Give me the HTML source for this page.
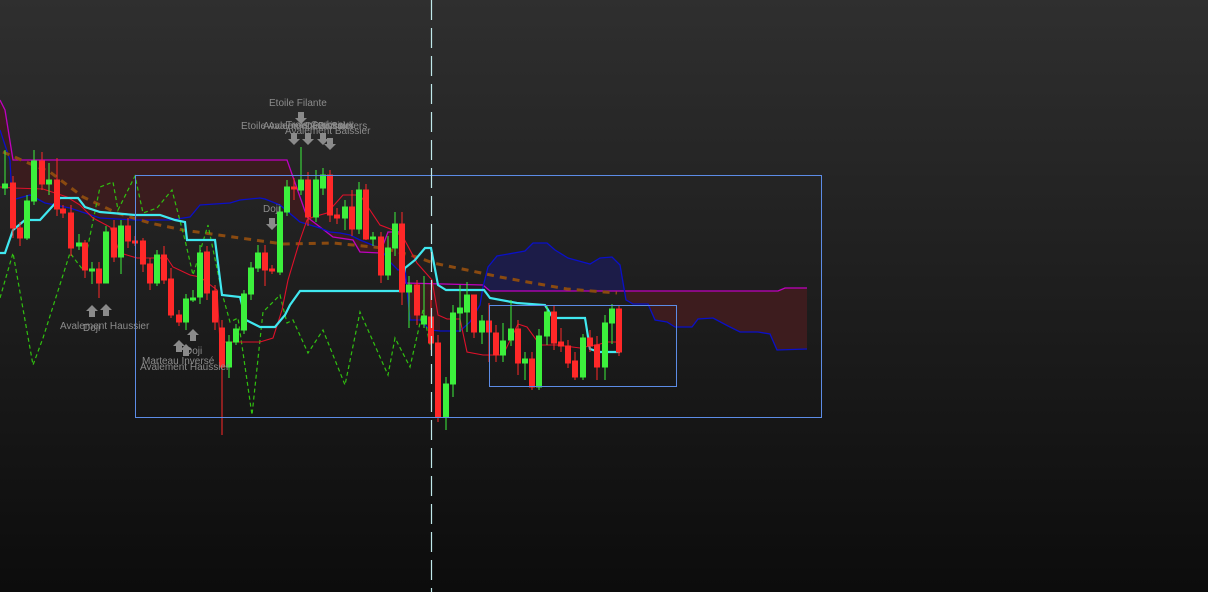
<!DOCTYPE html>
<html><head><meta charset="utf-8"><style>
html,body{margin:0;padding:0;width:1208px;height:592px;overflow:hidden;background:#1e1e1e}
svg{display:block}
text{font-family:"Liberation Sans",sans-serif;font-size:10px;fill:#8c8c8c}
</style></head><body>
<svg width="1208" height="592" viewBox="0 0 1208 592">
<defs><linearGradient id="bg" x1="0" y1="0" x2="0" y2="1"><stop offset="0" stop-color="#2f2f2f"/><stop offset="1" stop-color="#0c0c0c"/></linearGradient></defs>
<rect width="1208" height="592" fill="url(#bg)"/>
<polygon fill="#3d1c1e" opacity="0.9" points="0,100 5,110 13,160 287,160 293,177 307,217 333,237 353,240 360,252 380,253 388,232 402,232 405,283 440,283 440,331 430,330 420,320 410,320 405,268 398,270 390,262 380,248 360,240 350,235 340,233 330,232 320,228 300,222 280,205 265,199 260,198 240,200 230,203 200,205 190,217 170,220 135,220 100,218 70,208 45,203 30,195 12,200 10,160 0,130"/>
<polygon fill="#1c1c48" points="483,287 488,267 497,256 525,251 533,243 547,243 555,250 568,258 590,264 600,258 612,257 620,265 626,300 626,291 490,291"/>
<polygon fill="#3d1c1e" points="626,291 778,291 785,288 807,288 807,349 777,350 770,334 758,332 740,332 728,326 713,318 698,319 692,327 675,327 667,322 655,320 648,304 633,304 626,300"/>
<polyline fill="none" stroke="#c000c0" stroke-width="1.3" points="0,100 5,110 13,160 287,160 293,177 307,217 333,237 353,240 360,252 380,253 388,232 402,232 405,283 483,285 490,291 778,291 785,288 807,288"/>
<polyline fill="none" stroke="#0a10c8" stroke-width="1.3" points="0,130 10,160 12,200 30,195 45,203 70,208 100,218 135,220 170,220 190,217 200,205 230,203 240,200 260,198 265,199 280,205 300,222 320,228 330,232 340,233 350,235 360,240 380,248 390,262 398,270 405,268 410,320 420,320 430,330 440,331 460,331 470,322 480,305 483,287 488,267 497,256 525,251 533,243 547,243 555,250 568,258 590,264 600,258 612,257 620,265 626,300 633,304 648,304 655,320 667,322 675,327 692,327 698,319 713,318 728,326 740,332 758,332 770,334 777,350 807,349"/>
<polyline fill="none" stroke="#8a4a10" stroke-width="3" stroke-dasharray="7,6" points="3,152 33,165 50,172 83,197 117,213 150,223 183,230 233,237 283,244 333,243 383,248 417,257 433,263 467,270 500,277 533,283 567,289 617,293"/>
<polyline fill="none" stroke="#30c010" stroke-width="1.2" stroke-dasharray="4,3" points="0,298 13,253 33,365 43,338 70,253 83,270 100,187 113,182 118,210 135,176 143,213 157,208 172,190 185,240 193,275 208,225 222,293 230,322 238,318 252,415 263,312 280,295 287,323 293,320 308,353 323,330 345,385 360,312 388,375 395,338 410,367 423,310 430,345"/>
<polyline fill="none" stroke="#e0102a" stroke-width="1.1" points="0,187 13,188 43,189 67,197 80,205 93,218 110,227 120,253 137,258 167,258 173,267 190,275 200,277 217,290 220,342 260,342 273,338 282,310 288,280 300,240 307,220 313,217 327,213 343,195 360,195 380,225 393,230 403,237 417,263 432,280 438,315 447,319 460,319 467,352 483,355 503,355 518,324 527,327 540,345 557,345 580,348 600,344 607,342 620,342"/>
<polyline fill="none" stroke="#40e8f0" stroke-width="2.2" points="0,253 5,253 13,230 25,220 40,220 60,198 78,198 85,207 100,212 135,215 160,215 175,220 185,222 187,240 215,240 222,295 240,297 246,320 260,327 275,327 285,315 290,305 300,291 400,291 405,268 415,260 425,248 431,248 438,285 446,290 484,290 490,298 517,303 545,305 553,318 585,318 590,349 600,352 620,352"/>
<g stroke-width="1">
<g stroke="#ff2828" fill="#ff2828">
<line x1="13" y1="176" x2="13" y2="238"/><rect x="10.5" y="183" width="5" height="45"/>
<line x1="20" y1="222" x2="20" y2="246"/><rect x="17.5" y="228" width="5" height="10"/>
<line x1="42" y1="152" x2="42" y2="190"/><rect x="39.5" y="161" width="5" height="23"/>
<line x1="57" y1="158" x2="57" y2="216"/><rect x="54.5" y="180" width="5" height="29"/>
<line x1="63" y1="205" x2="63" y2="218"/><rect x="60.5" y="209" width="5" height="4"/>
<line x1="71" y1="205" x2="71" y2="256"/><rect x="68.5" y="213" width="5" height="35"/>
<line x1="85" y1="240" x2="85" y2="278"/><rect x="82.5" y="243" width="5" height="27"/>
<line x1="99" y1="262" x2="99" y2="298"/><rect x="96.5" y="269" width="5" height="14"/>
<line x1="114" y1="220" x2="114" y2="262"/><rect x="111.5" y="228" width="5" height="29"/>
<line x1="128" y1="218" x2="128" y2="248"/><rect x="125.5" y="226" width="5" height="15"/>
<line x1="135" y1="236" x2="135" y2="246"/><rect x="132.5" y="241" width="5" height="2"/>
<line x1="143" y1="238" x2="143" y2="272"/><rect x="140.5" y="241" width="5" height="23"/>
<line x1="150" y1="258" x2="150" y2="290"/><rect x="147.5" y="264" width="5" height="19"/>
<line x1="164" y1="246" x2="164" y2="284"/><rect x="161.5" y="255" width="5" height="25"/>
<line x1="171" y1="268" x2="171" y2="318"/><rect x="168.5" y="279" width="5" height="36"/>
<line x1="179" y1="310" x2="179" y2="326"/><rect x="176.5" y="315" width="5" height="7"/>
<line x1="207" y1="246" x2="207" y2="300"/><rect x="204.5" y="252" width="5" height="41"/>
<line x1="215" y1="285" x2="215" y2="330"/><rect x="212.5" y="291" width="5" height="31"/>
<line x1="222" y1="320" x2="222" y2="435"/><rect x="219.5" y="328" width="5" height="39"/>
<line x1="265" y1="245" x2="265" y2="286"/><rect x="262.5" y="253" width="5" height="17"/>
<line x1="272" y1="265" x2="272" y2="274"/><rect x="269.5" y="269" width="5" height="2"/>
<line x1="294" y1="178" x2="294" y2="200"/><rect x="291.5" y="187" width="5" height="2"/>
<line x1="308" y1="172" x2="308" y2="226"/><rect x="305.5" y="180" width="5" height="37"/>
<line x1="330" y1="170" x2="330" y2="222"/><rect x="327.5" y="175" width="5" height="40"/>
<line x1="337" y1="208" x2="337" y2="224"/><rect x="334.5" y="215" width="5" height="3"/>
<line x1="352" y1="190" x2="352" y2="236"/><rect x="349.5" y="207" width="5" height="22"/>
<line x1="366" y1="184" x2="366" y2="240"/><rect x="363.5" y="190" width="5" height="49"/>
<line x1="381" y1="232" x2="381" y2="283"/><rect x="378.5" y="237" width="5" height="38"/>
<line x1="402" y1="212" x2="402" y2="305"/><rect x="399.5" y="224" width="5" height="68"/>
<line x1="417" y1="280" x2="417" y2="325"/><rect x="414.5" y="285" width="5" height="30"/>
<line x1="431" y1="290" x2="431" y2="350"/><rect x="428.5" y="317" width="5" height="26"/>
<line x1="438" y1="335" x2="438" y2="422"/><rect x="435.5" y="343" width="5" height="74"/>
<line x1="474" y1="295" x2="474" y2="338"/><rect x="471.5" y="295" width="5" height="37"/>
<line x1="489" y1="303" x2="489" y2="362"/><rect x="486.5" y="321" width="5" height="11"/>
<line x1="496" y1="325" x2="496" y2="362"/><rect x="493.5" y="333" width="5" height="22"/>
<line x1="518" y1="320" x2="518" y2="375"/><rect x="515.5" y="329" width="5" height="34"/>
<line x1="532" y1="352" x2="532" y2="390"/><rect x="529.5" y="359" width="5" height="28"/>
<line x1="554" y1="305" x2="554" y2="350"/><rect x="551.5" y="312" width="5" height="31"/>
<line x1="561" y1="328" x2="561" y2="352"/><rect x="558.5" y="342" width="5" height="4"/>
<line x1="568" y1="340" x2="568" y2="368"/><rect x="565.5" y="346" width="5" height="17"/>
<line x1="575" y1="352" x2="575" y2="380"/><rect x="572.5" y="361" width="5" height="16"/>
<line x1="590" y1="330" x2="590" y2="352"/><rect x="587.5" y="338" width="5" height="8"/>
<line x1="597" y1="336" x2="597" y2="380"/><rect x="594.5" y="345" width="5" height="22"/>
<line x1="619" y1="306" x2="619" y2="356"/><rect x="616.5" y="309" width="5" height="43"/>
</g>
<g stroke="#3cf03c" fill="#3cf03c">
<line x1="5" y1="150" x2="5" y2="195"/><rect x="2.5" y="184" width="5" height="4"/>
<line x1="27" y1="195" x2="27" y2="240"/><rect x="24.5" y="201" width="5" height="37"/>
<line x1="34" y1="150" x2="34" y2="205"/><rect x="31.5" y="161" width="5" height="40"/>
<line x1="49" y1="163" x2="49" y2="195"/><rect x="46.5" y="180" width="5" height="4"/>
<line x1="79" y1="234" x2="79" y2="250"/><rect x="76.5" y="243" width="5" height="3"/>
<line x1="92" y1="262" x2="92" y2="284"/><rect x="89.5" y="269" width="5" height="2"/>
<line x1="106" y1="226" x2="106" y2="283"/><rect x="103.5" y="232" width="5" height="51"/>
<line x1="121" y1="220" x2="121" y2="274"/><rect x="118.5" y="226" width="5" height="31"/>
<line x1="157" y1="250" x2="157" y2="286"/><rect x="154.5" y="255" width="5" height="28"/>
<line x1="186" y1="294" x2="186" y2="330"/><rect x="183.5" y="299" width="5" height="23"/>
<line x1="193" y1="290" x2="193" y2="302"/><rect x="190.5" y="298" width="5" height="2"/>
<line x1="200" y1="245" x2="200" y2="304"/><rect x="197.5" y="253" width="5" height="44"/>
<line x1="229" y1="335" x2="229" y2="378"/><rect x="226.5" y="342" width="5" height="25"/>
<line x1="236" y1="324" x2="236" y2="345"/><rect x="233.5" y="329" width="5" height="13"/>
<line x1="244" y1="290" x2="244" y2="334"/><rect x="241.5" y="294" width="5" height="36"/>
<line x1="251" y1="262" x2="251" y2="300"/><rect x="248.5" y="268" width="5" height="26"/>
<line x1="258" y1="245" x2="258" y2="272"/><rect x="255.5" y="253" width="5" height="15"/>
<line x1="280" y1="206" x2="280" y2="275"/><rect x="277.5" y="212" width="5" height="60"/>
<line x1="287" y1="180" x2="287" y2="216"/><rect x="284.5" y="187" width="5" height="25"/>
<line x1="301" y1="147" x2="301" y2="195"/><rect x="298.5" y="180" width="5" height="10"/>
<line x1="316" y1="170" x2="316" y2="222"/><rect x="313.5" y="180" width="5" height="37"/>
<line x1="323" y1="168" x2="323" y2="195"/><rect x="320.5" y="175" width="5" height="13"/>
<line x1="345" y1="200" x2="345" y2="230"/><rect x="342.5" y="207" width="5" height="11"/>
<line x1="359" y1="182" x2="359" y2="234"/><rect x="356.5" y="190" width="5" height="39"/>
<line x1="373" y1="232" x2="373" y2="246"/><rect x="370.5" y="237" width="5" height="2"/>
<line x1="388" y1="236" x2="388" y2="280"/><rect x="385.5" y="248" width="5" height="27"/>
<line x1="395" y1="212" x2="395" y2="256"/><rect x="392.5" y="224" width="5" height="24"/>
<line x1="409" y1="276" x2="409" y2="328"/><rect x="406.5" y="285" width="5" height="7"/>
<line x1="424" y1="276" x2="424" y2="328"/><rect x="421.5" y="316" width="5" height="8"/>
<line x1="446" y1="377" x2="446" y2="430"/><rect x="443.5" y="384" width="5" height="33"/>
<line x1="453" y1="305" x2="453" y2="397"/><rect x="450.5" y="313" width="5" height="71"/>
<line x1="460" y1="285" x2="460" y2="332"/><rect x="457.5" y="308" width="5" height="5"/>
<line x1="467" y1="282" x2="467" y2="332"/><rect x="464.5" y="295" width="5" height="17"/>
<line x1="482" y1="315" x2="482" y2="344"/><rect x="479.5" y="321" width="5" height="11"/>
<line x1="503" y1="323" x2="503" y2="362"/><rect x="500.5" y="341" width="5" height="14"/>
<line x1="511" y1="300" x2="511" y2="346"/><rect x="508.5" y="329" width="5" height="11"/>
<line x1="525" y1="352" x2="525" y2="380"/><rect x="522.5" y="359" width="5" height="4"/>
<line x1="539" y1="329" x2="539" y2="390"/><rect x="536.5" y="336" width="5" height="51"/>
<line x1="547" y1="305" x2="547" y2="345"/><rect x="544.5" y="312" width="5" height="24"/>
<line x1="583" y1="334" x2="583" y2="380"/><rect x="580.5" y="338" width="5" height="39"/>
<line x1="605" y1="315" x2="605" y2="380"/><rect x="602.5" y="323" width="5" height="44"/>
<line x1="612" y1="304" x2="612" y2="344"/><rect x="609.5" y="309" width="5" height="14"/>
</g>
</g>
<rect x="135.5" y="175.5" width="686" height="242" fill="none" stroke="#5c8ce6" stroke-width="1"/>
<rect x="489.5" y="305.5" width="187" height="81" fill="none" stroke="#5c8ce6" stroke-width="1"/>
<line x1="431.5" y1="0" x2="431.5" y2="592" stroke="#bfe8ea" stroke-width="1.2" stroke-dasharray="20,8"/>
<g fill="#8a8a8a">
<path d="M298,112h6v6h3l-6,6l-6,-6h3z"/>
<path d="M291,133h6v6h3l-6,6l-6,-6h3z"/>
<path d="M305,133h6v6h3l-6,6l-6,-6h3z"/>
<path d="M320,133h6v6h3l-6,6l-6,-6h3z"/>
<path d="M327,138h6v6h3l-6,6l-6,-6h3z"/>
<path d="M269,218h6v6h3l-6,6l-6,-6h3z"/>
<path d="M89,317h6v-6h3l-6,-6l-6,6h3z"/>
<path d="M103,316h6v-6h3l-6,-6l-6,6h3z"/>
<path d="M176,352h6v-6h3l-6,-6l-6,6h3z"/>
<path d="M183,356h6v-6h3l-6,-6l-6,6h3z"/>
<path d="M190,341h6v-6h3l-6,-6l-6,6h3z"/>
</g>
<text x="269" y="106">Etoile Filante</text>
<text x="241" y="129">Etoile Avalement Baissier</text>
<text x="263" y="129">Avalement Baissier</text>
<text x="286" y="128">Trois Corbeaux</text>
<text x="305" y="129">Deux Soldiers</text>
<text x="285" y="134">Avalement Baissier</text>
<text x="263" y="212">Doji</text>
<text x="60" y="329">Avalement Haussier</text>
<text x="83" y="331">Doji</text>
<text x="185" y="354">Doji</text>
<text x="142" y="364">Marteau Inversé</text>
<text x="140" y="370">Avalement Haussier</text>
</svg>
</body></html>
